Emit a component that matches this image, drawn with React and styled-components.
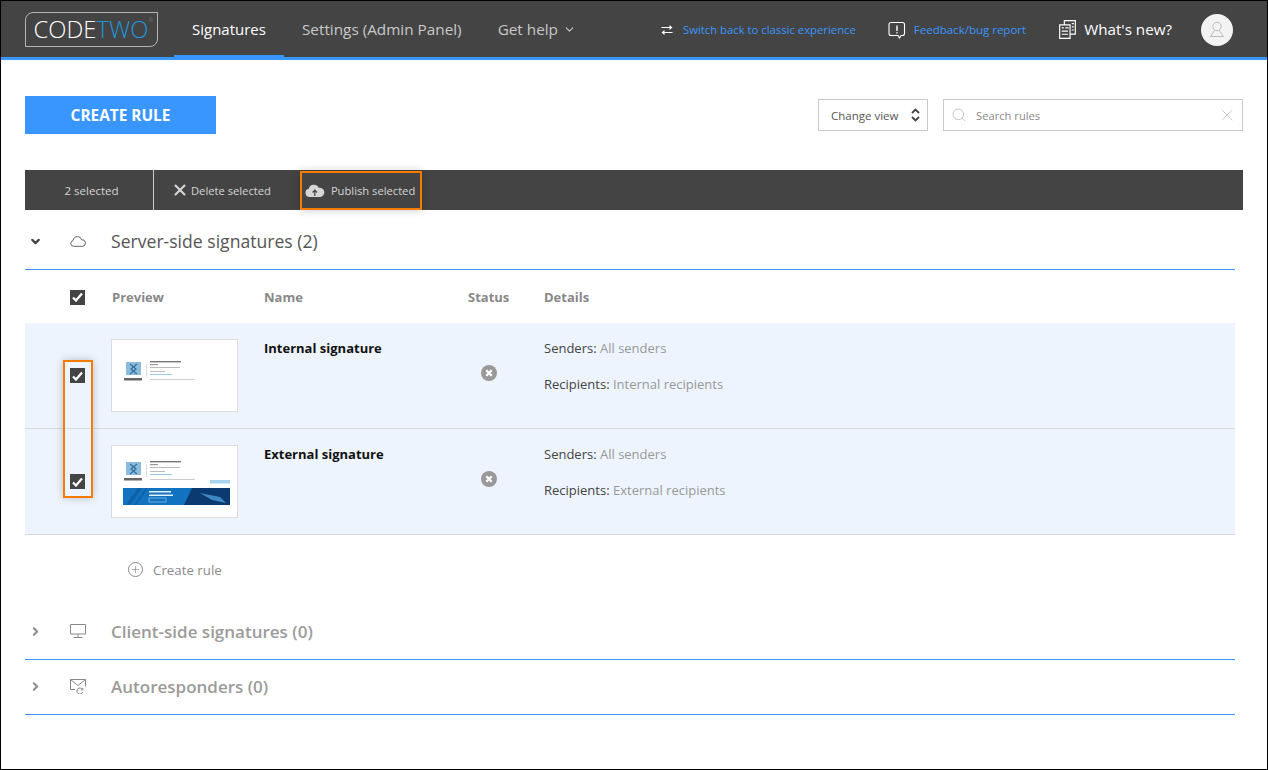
import React from 'react'
import styled, { createGlobalStyle } from 'styled-components'
import { ChevronDown, ChevronRight, Search, X, Plus } from 'lucide-react'

const GlobalStyle = createGlobalStyle`
  html, body {
    margin: 0;
    padding: 0;
    background: #fff;
  }
  * {
    box-sizing: border-box;
  }
  body {
    font-family: 'Open Sans', 'Liberation Sans', sans-serif;
    color: #444;
  }
`

const Screen = styled('div')`
  position: relative;
  width: 1268px;
  height: 770px;
  border: 1px solid #000;
  overflow: hidden;
`

const Nav = styled('header')`
  display: flex;
  align-items: stretch;
  height: 59px;
  background: #444;
  border-bottom: 3px solid #3996ff;
  padding-left: 24px;
`

const Logo = styled('div')`
  position: relative;
  display: flex;
  align-items: center;
  justify-content: center;
  width: 133px;
  height: 35px;
  margin-top: 11px;
  border: 1.5px solid #b5b5b5;
  border-radius: 8px 0 8px 0;
  font-size: 23.8px;
  font-weight: 300;
  color: #fff;
  padding: 0 1px 1px 0;
  span {
    color: #1f97dc;
  }
  small {
    position: absolute;
    top: 4px;
    right: 4px;
    font-size: 5px;
    color: #999;
  }
`

const Tabs = styled('nav')`
  display: flex;
  margin-left: 16px;
`

const Tab = styled('a')`
  display: flex;
  align-items: center;
  justify-content: center;
  gap: 5px;
  height: 59px;
  padding: ${(p) => (p.$active ? '2px 18px 0' : '2px 18px 5px')};
  font-size: ${(p) => (p.$active ? 15 : 15.3)}px;
  color: ${(p) => (p.$active ? '#fff' : '#c8c8c8')};
  border-bottom: ${(p) => (p.$active ? '5px solid #3996ff' : '0')};
  margin-bottom: -3px;
`

const NavRight = styled('div')`
  display: flex;
  align-items: center;
  margin-left: auto;
  padding-right: 34px;
  padding-top: 1px;
`

const NavLink = styled('a')`
  display: flex;
  align-items: center;
  gap: ${(p) => p.$gap || 8}px;
  margin-left: ${(p) => p.$left || 0}px;
  font-size: ${(p) => p.$size || 11.5}px;
  color: ${(p) => p.$color || '#3996ff'};
  line-height: 20px;
  svg {
    flex: none;
  }
`

const NewsLabel = styled('span')`
  position: relative;
  top: -1px;
`

const Avatar = styled('div')`
  display: flex;
  align-items: center;
  justify-content: center;
  width: 32px;
  height: 32px;
  margin-left: 29px;
  border-radius: 50%;
  background: #f3f3f3;
`

const Main = styled('main')`
  padding: 36px 24px 0;
`

const Toolbar = styled('div')`
  display: flex;
  align-items: center;
  height: 38px;
`

const CreateButton = styled('button')`
  width: 191px;
  height: 38px;
  border: 0;
  background: #3996ff;
  color: #fff;
  font-family: inherit;
  font-size: 15.4px;
  font-weight: 700;
`

const ViewSelect = styled('div')`
  display: flex;
  align-items: center;
  justify-content: space-between;
  width: 110px;
  height: 32px;
  margin-left: auto;
  padding: 0 7px 0 12px;
  border: 1px solid #c9c9c9;
  font-size: 11.5px;
  color: #555;
`

const SearchBox = styled('div')`
  display: flex;
  align-items: center;
  width: 300px;
  height: 32px;
  margin-left: 15px;
  padding: 0 5px 0 7px;
  border: 1px solid #c9c9c9;
  font-size: 11.2px;
  color: #8a8a8a;
  span {
    margin-left: 9px;
    flex: 1;
  }
`

const BulkBar = styled('div')`
  display: flex;
  align-items: center;
  height: 40px;
  margin-top: 36px;
  background: #444;
  color: #d5d5d5;
  font-size: 11.2px;
`

const BulkCount = styled('div')`
  display: flex;
  align-items: center;
  justify-content: center;
  width: 129px;
  height: 100%;
  padding-left: 5px;
  border-right: 1px solid #cfcfcf;
  font-size: 11.5px;
`

const BulkAction = styled('div')`
  display: flex;
  align-items: center;
  gap: ${(p) => p.$gap}px;
  margin-left: ${(p) => p.$left}px;
`

const Content = styled('div')`
  width: 1210px;
`

const SectionHead = styled('div')`
  display: grid;
  grid-template-columns: 45px 41px 1fr;
  align-items: center;
  height: ${(p) => p.$height}px;
  border-bottom: 1px solid #3996ff;
  color: ${(p) => (p.$muted ? '#9b9b9b' : '#555')};
  font-size: ${(p) => (p.$muted ? 17 : 17.6)}px;
  font-weight: ${(p) => (p.$muted ? 600 : 500)};
  padding-top: ${(p) => p.$top || 0}px;
  padding-bottom: ${(p) => p.$bottom || 0}px;
  svg {
    display: block;
  }
`

const Chevron = styled('div')`
  padding-left: 4px;
  color: ${(p) => (p.$muted ? '#8f8f8f' : '#444')};
`

const Grid = styled('div')`
  display: grid;
  grid-template-columns: 86px 153px 204px 76px 1fr;
`

const HeadRow = styled(Grid)`
  align-items: center;
  height: 53px;
  padding-top: 1px;
  font-size: 13px;
  font-weight: 700;
  color: #888;
  > div:nth-child(2) {
    padding-left: 1px;
  }
`

const Row = styled(Grid)`
  height: 106px;
  padding-top: 16px;
  background: #edf4fd;
  border-bottom: 1px solid #d9d9d9;
`

const Check = styled('span')`
  display: flex;
  align-items: center;
  justify-content: center;
  width: 15px;
  height: 15px;
  margin-left: 45px;
  margin-top: ${(p) => p.$top || 0}px;
  background: #444;
`

const Thumb = styled('div')`
  width: 127px;
  height: 73px;
  background: #fff;
  border: 1px solid #dcdcdc;
  svg {
    display: block;
    filter: blur(0.5px);
  }
`

const RuleName = styled('div')`
  font-size: 13px;
  font-weight: 700;
  color: #111;
  line-height: 18px;
`

const StatusCell = styled('div')`
  padding: 25px 0 0 13px;
`

const Details = styled('div')`
  display: flex;
  flex-direction: column;
  gap: 18px;
  font-size: 13px;
  line-height: 18px;
  color: #444;
  span {
    color: #999;
  }
`

const AddRule = styled('div')`
  display: flex;
  align-items: center;
  gap: 10px;
  height: 67px;
  padding: 2px 0 0 103px;
  font-size: 13.3px;
  color: #8a8a8a;
`

const PlusCircle = styled('span')`
  display: flex;
  align-items: center;
  justify-content: center;
  width: 15px;
  height: 15px;
  border: 1px solid #888;
  border-radius: 50%;
  color: #777;
`

const Highlight = styled('div')`
  position: absolute;
  left: ${(p) => p.$x}px;
  top: ${(p) => p.$y}px;
  width: ${(p) => p.$w}px;
  height: ${(p) => p.$h}px;
  border: 2px solid #f57c00;
  box-shadow: 0 0 8px rgba(0, 0, 0, 0.22);
  pointer-events: none;
`

const TickIcon = () => (
  <svg width="11" height="10" viewBox="0 0 11 10">
    <path d="M1 5.500 4 8.500 10 1.500" fill="none" stroke="#fff" strokeWidth="2.300" />
  </svg>
)

const SwitchIcon = () => (
  <svg width="12" height="12" viewBox="0 0 12 12" fill="#fff">
    <path d="M0.500 3h8V1l3 2.600-3 2.400V4h-8zM11.500 8h-8V6l-3 2.600 3 2.400V9h8z" />
  </svg>
)

const FeedbackIcon = () => (
  <svg width="18" height="18" viewBox="0 0 18 18" fill="none" stroke="#fff" strokeWidth="1.100">
    <path d="M3.500 1.500h11a2 2 0 0 1 2 2v9a2 2 0 0 1-2 2h-1.500l-1.500 2.500-1.500-2.500h-7a2 2 0 0 1-2-2v-9a2 2 0 0 1 2-2z" />
    <path d="M9 4.500v5.500M9 11.200v1.400" strokeWidth="1.400" />
  </svg>
)

const NewsIcon = () => (
  <svg width="17" height="19" viewBox="0 0 16 18" fill="none" stroke="#fff" strokeWidth="1.100">
    <path d="M.6 4.600h9.800v12.800H.6zM5 4.600V.6h10.400v12.800h-5" />
    <path d="M2.500 7.500h2M6 7.500h3M2.500 10.500h6M2.500 13.500h6M12 3.500h2M12 6.500h2M12 9.500h2" />
  </svg>
)

const UserIcon = () => (
  <svg width="16" height="20" viewBox="0 0 16 20" fill="none" stroke="#bbb" strokeWidth="1">
    <circle cx="8" cy="6.500" r="4.200" />
    <path d="M5.600 10.500 1.500 16.500h13l-4.100-6" />
  </svg>
)

const UpDownIcon = () => (
  <svg width="9" height="14" viewBox="0 0 9 14" fill="none" stroke="#444" strokeWidth="1.800">
    <path d="M1 5l3.500-3.500L8 5M1 9l3.500 3.500L8 9" />
  </svg>
)

const CloudUpIcon = () => (
  <svg width="20" height="14" viewBox="0 0 20 14">
    <path fill="#d5d5d5" d="M4.500 14a4.200 4.200 0 0 1-.7-8.300 5 5 0 0 1 4-3.900 5.600 5.600 0 0 1 6 3 4.600 4.600 0 0 1 1.700 9.200z" />
    <path d="M9.800 13V7.500M7.600 9.500l2.200-2.400 2.200 2.400" fill="none" stroke="#444" strokeWidth="1.200" />
  </svg>
)

const CloudIcon = () => (
  <svg width="16" height="11" viewBox="0 0 16 11" fill="none" stroke="#555" strokeWidth="0.900">
    <path d="M3.500 10.300a2.900 2.900 0 0 1-.5-5.700 4.800 4.800 0 0 1 4.800-4 4 4 0 0 1 3.700 3.200 3.300 3.300 0 0 1 1.300 6.500z" />
  </svg>
)

const MonitorIcon = () => (
  <svg width="16" height="14" viewBox="0 0 16 14" fill="none" stroke="#888" strokeWidth="1">
    <path d="M.5.500h15v9.500H.5zM8 10v3.500M3.500 13.500h9" />
  </svg>
)

const MailIcon = () => (
  <svg width="16" height="15" viewBox="0 0 16 15" fill="none" stroke="#888" strokeWidth="1">
    <path d="M5 10.500H.5V.500h15v7M.5.500 8 6.500l7.500-6" />
    <path d="M12.500 10.500a3 3 0 1 0 .2 2.500M12.800 8.800v2h-2" />
  </svg>
)

const StatusIcon = () => (
  <svg width="16" height="16" viewBox="0 0 16 16">
    <circle cx="8" cy="8" r="8" fill="#999" />
    <path d="M5.300 5.300l5.400 5.400M10.700 5.300l-5.400 5.400" stroke="#fff" strokeWidth="2.300" />
  </svg>
)

// the signature card is a tiny picture in the reference, so it is drawn as shapes
const SignaturePreview = ({ banner }) => (
  <svg width="125" height="71" viewBox="0 0 125 71">
    <g transform={banner ? 'translate(0 -5)' : 'translate(0 1)'}>
      <rect x="14" y="21" width="15" height="13" fill="#8dbbdc" />
      <path stroke="#2f6f9f" strokeWidth="1.200" fill="none" d="M18 23l6 5-6 5M25 23l-6 5 6 5" />
      <rect x="12" y="37" width="18" height="2.500" fill="#666" />
      <path stroke="#ddd" d="M34.500 23v13" />
      <rect x="38" y="20" width="31" height="1.400" fill="#777" />
      <rect x="38" y="23" width="8" height="1.200" fill="#999" />
      <rect x="38" y="26" width="30" height="1" fill="#bbb" />
      <rect x="38" y="30" width="15" height="1" fill="#bbb" />
      <rect x="38" y="33" width="22" height="0.800" fill="#7fc0e8" />
      <rect x="38" y="38" width="45" height="1" fill="#ccc" />
    </g>
    {banner && (
      <g>
        <rect x="98" y="34" width="20" height="3.500" fill="#a6d4f0" />
        <rect x="11" y="42" width="107" height="17" fill="#1173bf" />
        <path fill="#0f5fa6" d="M14 59l12-17h4L18 59zM22 59l12-17h2L24 59z" />
        <path fill="#0b3a70" d="M80 42h38v17H72z" />
        <path fill="#3f86c4" d="M88 47l20 4 6 6-14-3z" />
        <rect x="37" y="45" width="22" height="1.500" fill="#e3eff9" />
        <rect x="37" y="48.500" width="24" height="1.500" fill="#e3eff9" />
        <rect x="37" y="52" width="17" height="4" fill="none" stroke="#cfe2f2" strokeWidth="0.500" />
      </g>
    )}
  </svg>
)

const rules = [
  { id: 'internal', name: 'Internal signature', recipients: 'Internal recipients', top: 29 },
  { id: 'external', name: 'External signature', recipients: 'External recipients', banner: true, top: 29 },
]

export default function App() {
  return (
    <Screen>
      <GlobalStyle />
      <Nav>
        <Logo>CODE<span>TWO</span><small>®</small></Logo>
        <Tabs>
          <Tab $active>Signatures</Tab>
          <Tab>Settings (Admin Panel)</Tab>
          <Tab>Get help <ChevronDown size={13} strokeWidth={2} /></Tab>
        </Tabs>
        <NavRight>
          <NavLink $gap={10} $size={11.3}><SwitchIcon /> Switch back to classic experience</NavLink>
          <NavLink $left={32} $gap={8}><FeedbackIcon /> Feedback/bug report</NavLink>
          <NavLink $left={33} $gap={8} $size={15.2} $color="#fff"><NewsIcon /> <NewsLabel>What's new?</NewsLabel></NavLink>
          <Avatar><UserIcon /></Avatar>
        </NavRight>
      </Nav>
      <Main>
        <Toolbar>
          <CreateButton>CREATE RULE</CreateButton>
          <ViewSelect>Change view <UpDownIcon /></ViewSelect>
          <SearchBox>
            <Search size={16} color="#bbb" strokeWidth={1.300} />
            <span>Search rules</span>
            <X size={20} color="#bbb" strokeWidth={0.900} />
          </SearchBox>
        </Toolbar>
        <BulkBar>
          <BulkCount>2 selected</BulkCount>
          <BulkAction $left={17} $gap={2}><X size={18} strokeWidth={2.800} /> Delete selected</BulkAction>
          <BulkAction $left={34} $gap={6}><CloudUpIcon /> Publish selected</BulkAction>
        </BulkBar>
        <Content>
          <SectionHead $height={60} $top={3}>
            <Chevron><ChevronDown size={13} strokeWidth={4} /></Chevron>
            <div><CloudIcon /></div>
            <div>Server-side signatures (2)</div>
          </SectionHead>
          <HeadRow>
            <Check><TickIcon /></Check>
            <div>Preview</div>
            <div>Name</div>
            <div>Status</div>
            <div>Details</div>
          </HeadRow>
          {rules.map((rule) => (
            <Row key={rule.id}>
              <Check $top={rule.top}><TickIcon /></Check>
              <Thumb><SignaturePreview banner={rule.banner} /></Thumb>
              <RuleName>{rule.name}</RuleName>
              <StatusCell><StatusIcon /></StatusCell>
              <Details>
                <div>Senders: <span>All senders</span></div>
                <div>Recipients: <span>{rule.recipients}</span></div>
              </Details>
            </Row>
          ))}
          <AddRule>
            <PlusCircle><Plus size={11} strokeWidth={1.300} /></PlusCircle>
            Create rule
          </AddRule>
          <SectionHead $muted $height={58} $top={1}>
            <Chevron $muted><ChevronRight size={13} strokeWidth={4} /></Chevron>
            <div><MonitorIcon /></div>
            <div>Client-side signatures (0)</div>
          </SectionHead>
          <SectionHead $muted $height={55} $bottom={2}>
            <Chevron $muted><ChevronRight size={13} strokeWidth={4} /></Chevron>
            <div><MailIcon /></div>
            <div>Autoresponders (0)</div>
          </SectionHead>
        </Content>
      </Main>
      <Highlight $x={299} $y={170} $w={122} $h={39} />
      <Highlight $x={62} $y={359} $w={30} $h={138} />
    </Screen>
  )
}
